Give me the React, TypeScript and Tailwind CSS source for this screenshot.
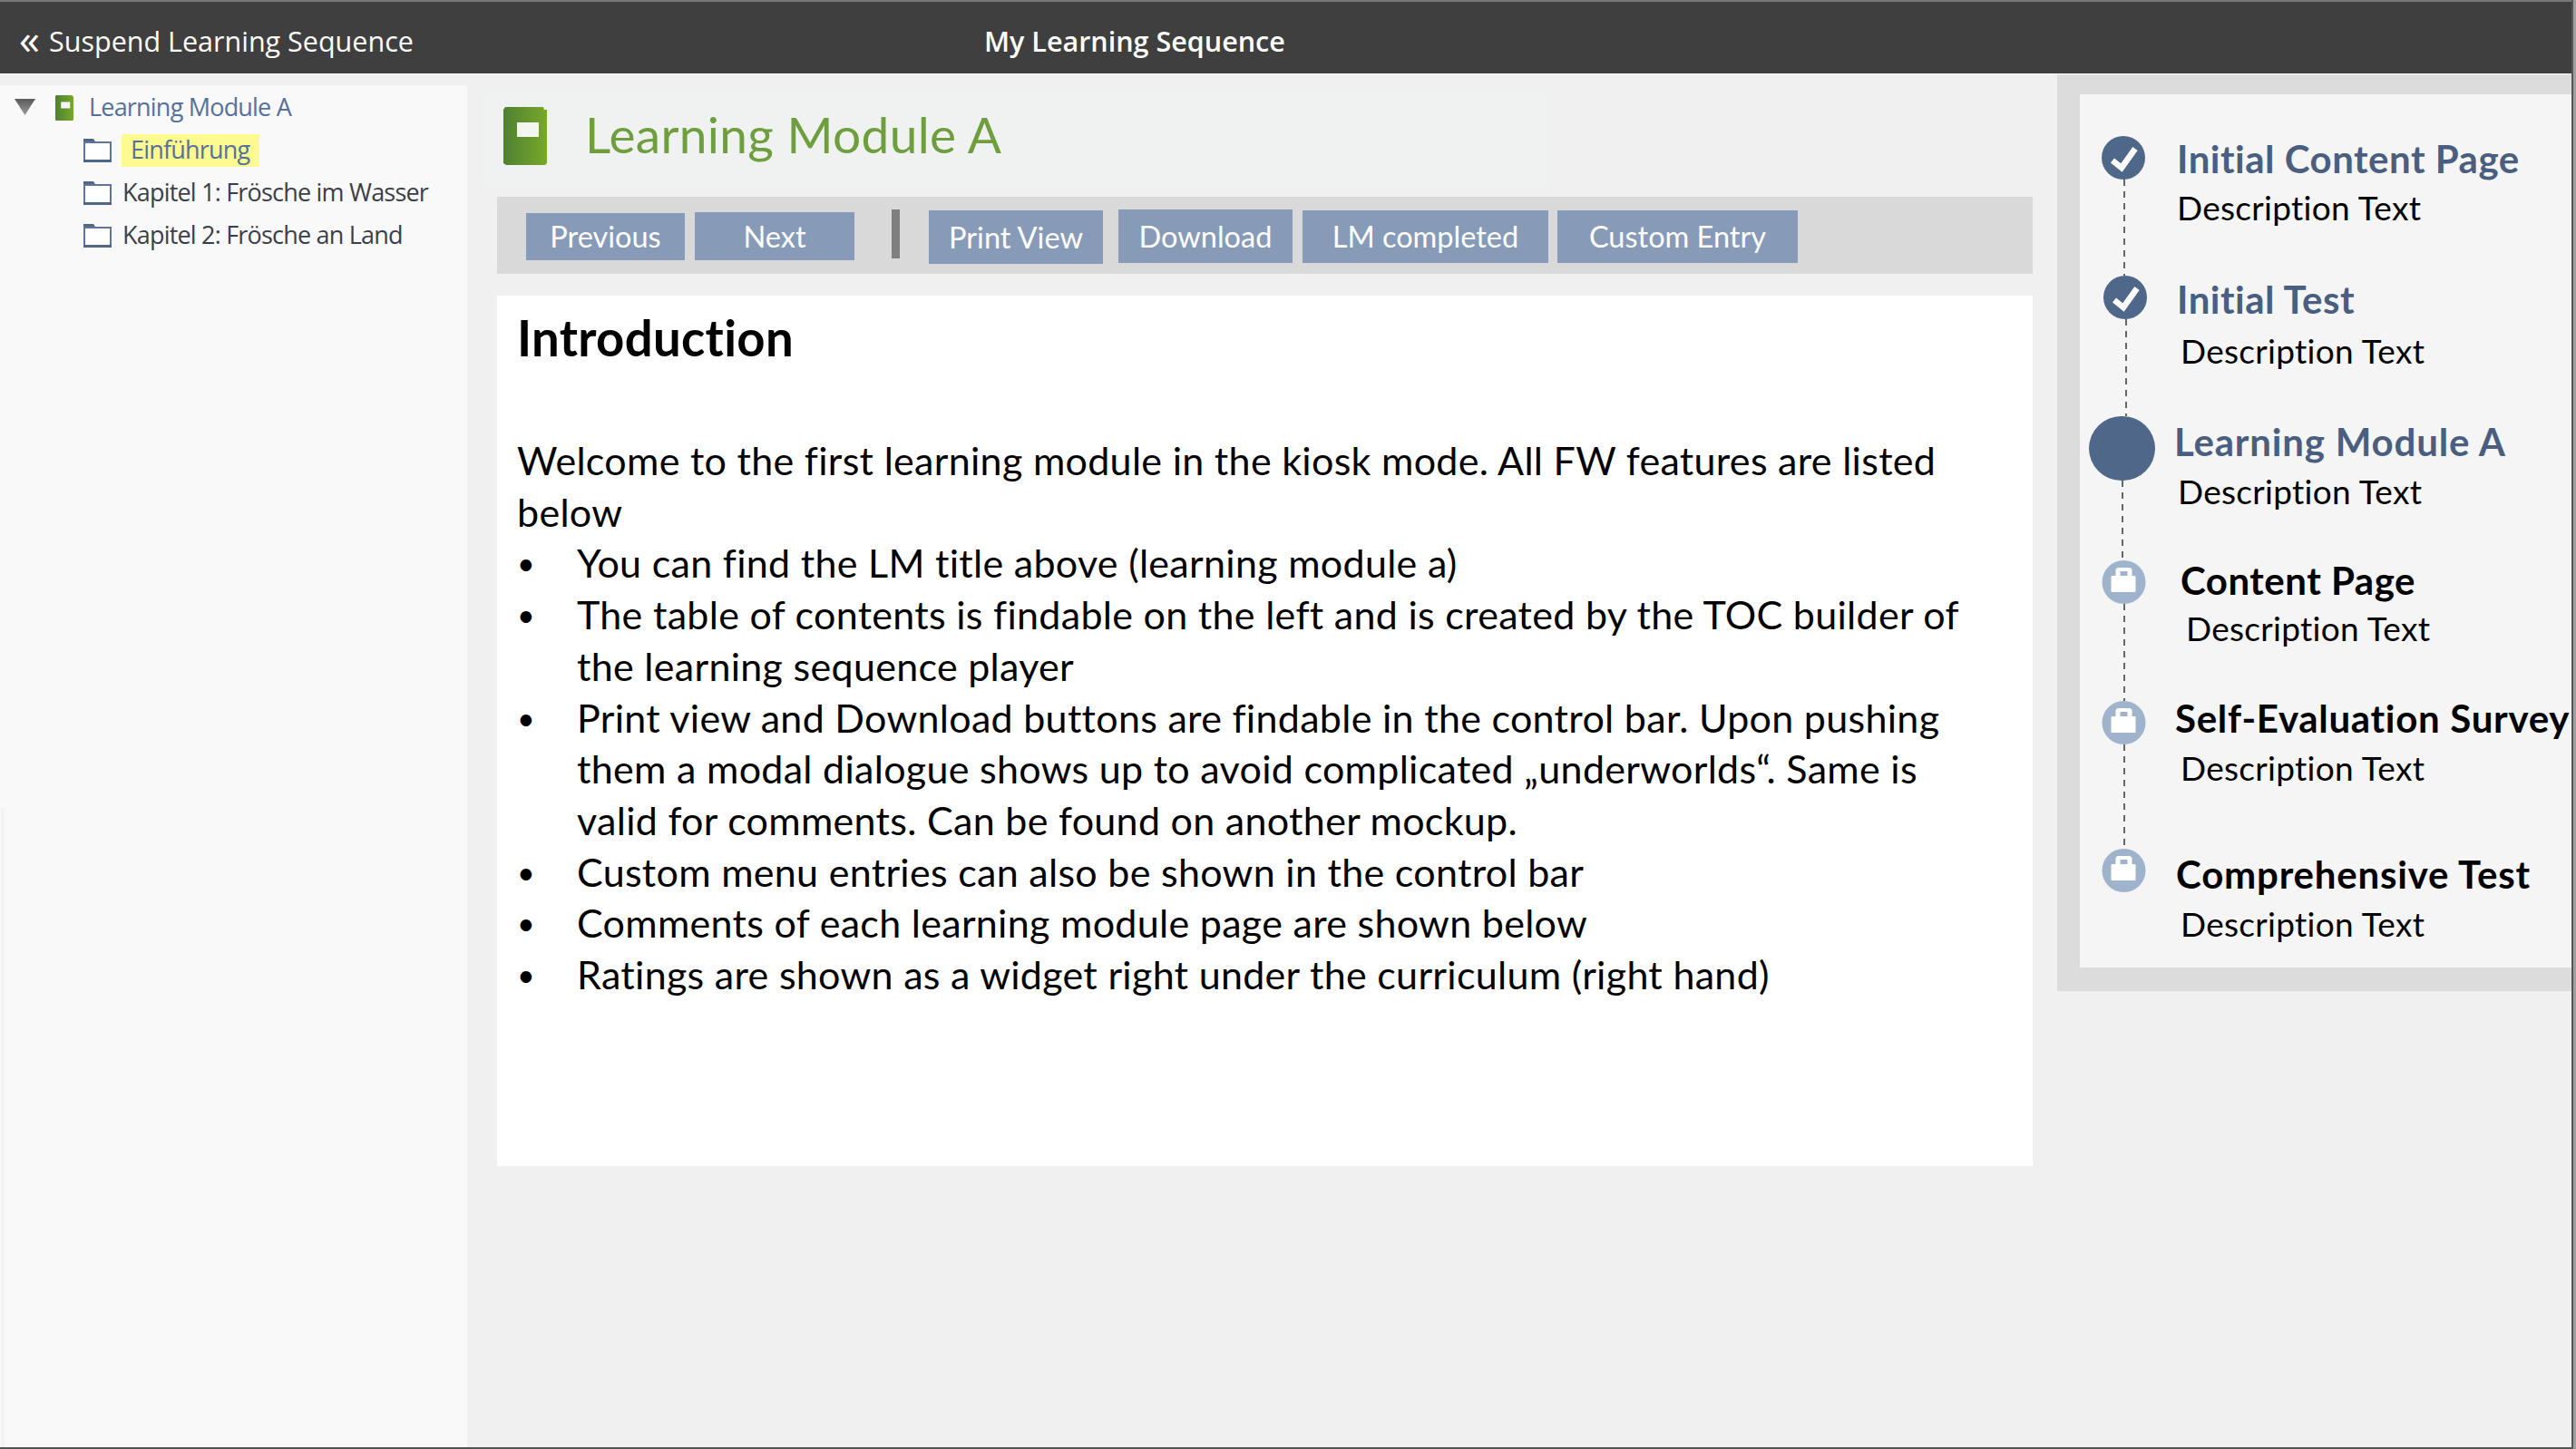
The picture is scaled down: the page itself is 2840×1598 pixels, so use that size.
import type { ReactNode } from 'react';

const sans = "[font-family:'Open_Sans',sans-serif]";
const cal = '[font-family:Lato,sans-serif] [font-variant-ligatures:none]';

const Folder = () => (
  <svg width="31" height="27" viewBox="0 0 31 27" className="shrink-0">
    <path d="M1 5h29v20H1z" fill="#fff" stroke="#5f7699" strokeWidth="2" />
    <path d="M0 4V1h11l2 3zM0 24h31v3H0z" fill="#4f6789" />
  </svg>
);

const Book = ({ w, h, id }: { w: number; h: number; id: string }) => (
  <svg width={w} height={h} viewBox="0 0 48 64" preserveAspectRatio="none" className="shrink-0">
    <defs>
      <linearGradient id={id} x1="0" x2="1" y1="0" y2="0">
        <stop offset="0" stopColor="#4f8032" />
        <stop offset="1" stopColor="#78a82a" />
      </linearGradient>
    </defs>
    <path d="M2 0h42l1 3h3v59l-2 2H3l-3-2V3z" fill={`url(#${id})`} />
    <rect x="15" y="17" width="24" height="16" fill="#f4f6f1" />
  </svg>
);

const CheckDot = () => (
  <svg width="50" height="48" viewBox="0 0 48 48" className="shrink-0">
    <circle cx="24" cy="24" r="24" fill="#4f6789" />
    <path d="M12 27l10 8L37 14" fill="none" stroke="#fff" strokeWidth="6.5" />
  </svg>
);

const LockDot = () => (
  <svg width="49" height="48" viewBox="0 0 48 48" className="shrink-0">
    <circle cx="24" cy="24" r="24" fill="#a0b3cd" />
    <path d="M15 18V10l2-2h14l2 2v8h-5v-6h-8v6z" fill="#fff" />
    <rect x="10" y="17" width="27" height="18" rx="1" fill="#fff" />
  </svg>
);

type Step = {
  title: string;
  dot: ReactNode;
  rowClass: string;
  dotClass: string;
  titleClass: string;
  descClass: string;
};

const steps: Step[] = [
  {
    title: 'Initial Content Page',
    dot: <CheckDot />,
    rowClass: 'h-[154px]',
    dotClass: 'ml-0',
    titleClass: 'ml-[11px] mt-0 text-[#4a5f7f]',
    descClass: 'ml-[11px] mt-px',
  },
  {
    title: 'Initial Test',
    dot: <CheckDot />,
    rowClass: 'h-[155px]',
    dotClass: 'ml-[4px]',
    titleClass: 'ml-[11px] mt-px text-[#4a5f7f]',
    descClass: 'ml-[15px] mt-[4px]',
  },
  {
    title: 'Learning Module A',
    dot: <div className="mt-0 h-[71px] w-[73px] shrink-0 rounded-full bg-[#4f6789]" />,
    rowClass: 'h-[159px]',
    dotClass: 'ml-[-4px]',
    titleClass: 'ml-[8px] mt-[3px] tracking-[0.8px] text-[#4a5f7f]',
    descClass: 'ml-[12px] mt-[2px]',
  },
  {
    title: 'Content Page',
    dot: <LockDot />,
    rowClass: 'h-[155px]',
    dotClass: 'ml-0',
    titleClass: 'ml-[15px] mt-[-3px] text-black',
    descClass: 'ml-[21px]',
  },
  {
    title: 'Self-Evaluation Survey',
    dot: <LockDot />,
    rowClass: 'h-[163px]',
    dotClass: 'ml-0',
    titleClass: 'ml-[9px] mt-[-6px] tracking-[0.7px] text-black',
    descClass: 'ml-[15px] mt-[2px]',
  },
  {
    title: 'Comprehensive Test',
    dot: <LockDot />,
    rowClass: 'h-[131px]',
    dotClass: 'ml-0',
    titleClass: 'ml-[10px] mt-[3px] tracking-[0.8px] text-black',
    descClass: 'ml-[15px] mt-[2px]',
  },
];

const buttons = [
  { label: 'Previous', cls: 'ml-[32px] mt-[18px] h-[52px] w-[175px]' },
  { label: 'Next', cls: 'ml-[11px] mt-[17px] h-[53px] w-[176px]' },
  { label: 'Print View', cls: 'ml-[32px] mt-[15px] h-[59px] w-[192px]' },
  { label: 'Download', cls: 'ml-[17px] mt-[14px] h-[59px] w-[192px]' },
  { label: 'LM completed', cls: 'ml-[11px] mt-[15px] h-[58px] w-[271px]' },
  { label: 'Custom Entry', cls: 'ml-[10px] mt-[15px] h-[58px] w-[265px]' },
];

const bullets: ReactNode[] = [
  'You can find the LM title above (learning module a)',
  <>
    The table of contents is findable on the left and is created by the TOC builder of
    <br />
    the learning sequence player
  </>,
  <>
    Print view and Download buttons are findable in the control bar. Upon pushing
    <br />
    them a modal dialogue shows up to avoid complicated „underworlds“. Same is
    <br />
    valid for comments. Can be found on another mockup.
  </>,
  'Custom menu entries can also be shown in the control bar',
  'Comments of each learning module page are shown below',
  'Ratings are shown as a widget right under the curriculum (right hand)',
];

const Sidebar = () => (
  <aside className={`relative mt-[12px] w-[515px] shrink-0 bg-[#f9f9f9] text-[27px] tracking-[-0.8px] ${sans}`}>
    <div className="absolute bottom-0 left-px top-[797px] w-[4px] bg-[#f3f3f3]" />
    <div className="flex h-[48px] items-center pl-[16px]">
      <svg width="23" height="18" viewBox="0 0 23 18" className="shrink-0">
        <defs>
          <linearGradient id="tri" x1="0" x2="0" y1="0" y2="1">
            <stop offset="0" stopColor="#5a5a5a" />
            <stop offset="1" stopColor="#9a9a9a" />
          </linearGradient>
        </defs>
        <path d="M0 0h23L11.5 18z" fill="url(#tri)" />
      </svg>
      <div className="ml-[22px] mt-[2px]">
        <Book w={20} h={28} id="bookSmall" />
      </div>
      <span className="ml-[17px] whitespace-nowrap text-[#56719c]">Learning Module A</span>
    </div>
    <div className="flex h-[47px] items-center pl-[92px] text-[#56719c]">
      <Folder />
      <span className="ml-[11px] flex h-[36px] w-[152px] items-center whitespace-nowrap bg-[#fdfb8f] pl-[10px]">Einführung</span>
    </div>
    <div className="flex h-[47px] items-center pl-[92px] text-[#3b3f4a]">
      <Folder />
      <span className="ml-[12px] whitespace-nowrap">Kapitel 1: Frösche im Wasser</span>
    </div>
    <div className="flex h-[47px] items-center pl-[92px] text-[#3b3f4a]">
      <Folder />
      <span className="ml-[12px] whitespace-nowrap">Kapitel 2: Frösche an Land</span>
    </div>
  </aside>
);

const Content = () => (
  <main className={`ml-[33px] w-[1693px] shrink-0 ${cal}`}>
    <div className="ml-[-15px] mt-[20px] flex h-[105px] w-[1171px] items-start bg-[#f0f2f1] pl-[22px] pt-[16px]">
      <Book w={48} h={64} id="bookBig" />
      <h1 className="ml-[42px] mt-[-6px] whitespace-nowrap text-[55px] leading-[72px] tracking-[0.3px] text-[#6f9e3e]">Learning Module A</h1>
    </div>
    <div className="mt-[10px] flex h-[85px] items-start bg-[#d9d9d9]">
      {buttons.map((b, i) => (
        <div key={b.label} className="contents">
          {i === 2 && <div className="ml-[41px] mt-[14px] h-[54px] w-[9px] shrink-0 bg-[#7f7f7f]" />}
          <button className={`flex shrink-0 items-center justify-center whitespace-nowrap bg-[#879bb8] pt-px text-[32.5px] text-white ${b.cls}`}>
            {b.label}
          </button>
        </div>
      ))}
    </div>
    <div className="mt-[24px] h-[960px] bg-white pl-[22px] pt-[14px] text-[43px] leading-[56.7px] tracking-[0.3px] text-black">
      <h2 className="h-[140px] pt-px text-[54.5px] font-bold leading-[63px] tracking-[0.3px]">Introduction</h2>
      <p>
        Welcome to the first learning module in the kiosk mode. All FW features are listed
        <br />
        below
      </p>
      <ul>
        {bullets.map((b, i) => (
          <li key={i} className="flex whitespace-nowrap">
            <span className="w-[66px] shrink-0 text-[34px]">•</span>
            <span>{b}</span>
          </li>
        ))}
      </ul>
    </div>
  </main>
);

const Timeline = () => (
  <section className={`ml-[27px] h-[1011px] w-[567px] shrink-0 bg-[#dcdcdc] pl-[25px] pt-[22px] ${cal}`}>
    <div className="h-[963px] overflow-hidden bg-[#f5f5f5] pt-[46px]">
      {steps.map((s, i) => (
        <div key={s.title} className={`flex ${s.rowClass}`}>
          <div className="flex w-[96px] shrink-0 flex-col items-center">
            <div className={s.dotClass}>{s.dot}</div>
            {i < steps.length - 1 && (
              <div className={`relative left-px w-[2px] flex-1 bg-[repeating-linear-gradient(to_bottom,#666_0_7px,transparent_7px_13px)] ${s.dotClass}`} />
            )}
          </div>
          <div className="min-w-0 whitespace-nowrap">
            <div className={`text-[42px] font-bold leading-[50px] tracking-[0.5px] ${s.titleClass}`}>{s.title}</div>
            <div className={`text-[37px] leading-[56px] tracking-[0.3px] text-black ${s.descClass}`}>Description Text</div>
          </div>
        </div>
      ))}
    </div>
  </section>
);

export default function App() {
  return (
    <div className="flex h-[1598px] w-[2840px] overflow-hidden bg-[#f0f0f0]">
      <div className="flex w-[2835px] shrink-0 flex-col border-b-2 border-[#555]">
        <header className={`flex h-[82px] shrink-0 items-center border-b border-t-2 border-b-white border-t-[#777] bg-[#3f3f3f] pt-[8px] text-[30.5px] text-white ${sans}`}>
          <span className="ml-[21px] mt-[-8px] w-[33px] text-[46px] leading-none">«</span>
          <span className="whitespace-nowrap">Suspend Learning Sequence</span>
          <span className="absolute left-[1085px] whitespace-nowrap font-semibold">My Learning Sequence</span>
        </header>
        <div className="flex min-h-0 flex-1">
          <Sidebar />
          <Content />
          <Timeline />
        </div>
      </div>
      <div className="w-[5px] shrink-0 border-l-2 border-[#555] bg-[#a0a0a0]" />
    </div>
  );
}
